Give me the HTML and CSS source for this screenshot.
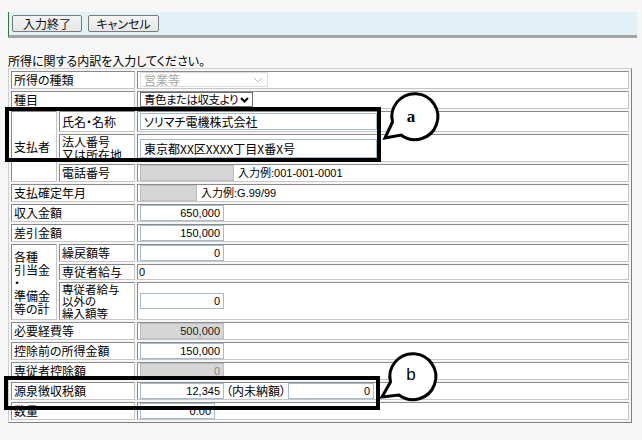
FILE: index.html
```html
<!DOCTYPE html>
<html lang="ja">
<head>
<meta charset="utf-8">
<title>所得の内訳</title>
<link rel="stylesheet" href="styles.css">
</head>
<body>
<div class="page">
  <div class="toolbar">
    <button class="btn btn-done" type="button">入力終了</button>
    <button class="btn btn-cancel" type="button">キャンセル</button>
  </div>
  <p class="lead">所得に関する内訳を入力してください。</p>
  <table class="form">
    <colgroup><col class="c1"><col class="c2"><col class="c3"></colgroup>
    <tr>
      <th colspan="2">所得の種類</th>
      <td><div class="select select-off"><span>営業等</span><svg width="10" height="6" viewBox="0 0 10 6"><path d="M1 1l4 4 4-4" fill="none" stroke="#b8b8b8" stroke-width="1"/></svg></div></td>
    </tr>
    <tr>
      <th colspan="2">種目</th>
      <td><div class="select select-on"><span>青色または収支より</span><svg width="9" height="6" viewBox="0 0 9 6"><path d="M1 1l3.5 3.5L8 1" fill="none" stroke="#000" stroke-width="2"/></svg></div></td>
    </tr>
    <tr class="row-name">
      <th rowspan="3" class="group">支払者</th>
      <th>氏名・名称</th>
      <td><input class="fld fld-text" type="text" value="ソリマチ電機株式会社"></td>
    </tr>
    <tr class="row-addr">
      <th class="two">法人番号<br>又は所在地</th>
      <td><input class="fld fld-text" type="text" value="東京都XX区XXXX丁目X番X号"></td>
    </tr>
    <tr>
      <th>電話番号</th>
      <td><input class="fld fld-off fld-tel" type="text" disabled><span class="hint">入力例:001-001-0001</span></td>
    </tr>
    <tr>
      <th colspan="2">支払確定年月</th>
      <td><input class="fld fld-off fld-ym" type="text" disabled><span class="hint">入力例:G.99/99</span></td>
    </tr>
    <tr>
      <th colspan="2">収入金額</th>
      <td><input class="fld fld-num" type="text" value="650,000"></td>
    </tr>
    <tr>
      <th colspan="2">差引金額</th>
      <td><input class="fld fld-num" type="text" value="150,000"></td>
    </tr>
    <tr>
      <th rowspan="3" class="group stack">各種<br>引当金<br>・<br>準備金<br>等の計</th>
      <th>繰戻額等</th>
      <td><input class="fld fld-num" type="text" value="0"></td>
    </tr>
    <tr class="row-thin">
      <th>専従者給与</th>
      <td class="plain">0</td>
    </tr>
    <tr>
      <th class="three">専従者給与<br>以外の<br>繰入額等</th>
      <td><input class="fld fld-num" type="text" value="0"></td>
    </tr>
    <tr>
      <th colspan="2">必要経費等</th>
      <td><input class="fld fld-num fld-off" type="text" value="500,000" disabled></td>
    </tr>
    <tr>
      <th colspan="2">控除前の所得金額</th>
      <td><input class="fld fld-num" type="text" value="150,000"></td>
    </tr>
    <tr>
      <th colspan="2">専従者控除額</th>
      <td><input class="fld fld-num fld-off fld-dim" type="text" value="0" disabled></td>
    </tr>
    <tr>
      <th colspan="2">源泉徴収税額</th>
      <td><input class="fld fld-num" type="text" value="12,345"><span class="sub">（内未納額）</span><input class="fld fld-num fld-unpaid" type="text" value="0"></td>
    </tr>
    <tr>
      <th colspan="2">数量</th>
      <td><input class="fld fld-num fld-qty" type="text" value="0.00"></td>
    </tr>
  </table>

  <svg class="marks" width="642" height="440" viewBox="0 0 642 440">
    <rect x="7" y="109" width="372" height="51" fill="none" stroke="#000" stroke-width="4"/>
    <path d="M392.5 122 A23 23 0 1 1 401 135 L385 138 Z" fill="#fff" stroke="#000" stroke-width="3"/>
    <text x="411" y="122" class="mark-a">a</text>
    <rect x="6" y="378" width="372" height="30" fill="none" stroke="#000" stroke-width="4"/>
    <path d="M390.5 382 A23 23 0 1 1 399 395 L382 397 Z" fill="#fff" stroke="#000" stroke-width="3"/>
    <text x="411" y="380" class="mark-b">b</text>
  </svg>
</div>
</body>
</html>
```

FILE: styles.css
```css
html, body {
  margin: 0;
  background: #f6f6f6;
}

body {
  font: 12px/14px "Noto Sans CJK JP", sans-serif;
  font-feature-settings: "palt";
  color: #000;
}

.page {
  position: relative;
  height: 440px;
  padding: 12px 5px 0 8px;
  box-sizing: border-box;
  overflow: hidden;
}

/* command strip */
.toolbar {
  display: flex;
  align-items: center;
  gap: 6px;
  height: 23px;
  padding: 0 3px;
  background: #e2f1f7;
  border-left: 1px solid #2e7d32;
  border-bottom: 3px solid #a4a4a4;
}

.btn {
  height: 17px;
  padding: 0;
  font: 12px/15px "Noto Sans CJK JP", sans-serif;
  font-feature-settings: "palt";
  color: #111;
  background: linear-gradient(#f4f4f4, #e6e6e6);
  border: 1px solid #7a7a7a;
  border-radius: 2px;
}

.btn-done { width: 70px; }
.btn-cancel { width: 71px; }

.lead {
  margin: 16px 0 0;
  line-height: 14px;
}

/* entry table */
.form {
  width: 624px;
  table-layout: fixed;
  border-collapse: separate;
  border-spacing: 2px;
  border: 1px solid;
  border-color: #cfcfcf #7f7f7f #7f7f7f #cfcfcf;
}

.c1 { width: 46px; }
.c2 { width: 76px; }
.c3 { width: 492px; }

.form th,
.form td {
  height: 16px;
  padding: 0 0 0 2px;
  border: 1px solid;
  border-color: #8a8a8a #c6c6c6 #c6c6c6 #8a8a8a;
  background: #fff;
  font-weight: normal;
  text-align: left;
  line-height: 16px;
  vertical-align: middle;
  white-space: nowrap;
}

.form td { padding-left: 1px; }

.form th.two { line-height: 13px; }
.form th.three { font-size: 11.5px; line-height: 12px; }
.form th.stack { line-height: 13px; }

.row-name td { padding-top: 1px; padding-bottom: 1px; }
.row-thin th, .row-thin td { height: 14px; line-height: 14px; }
.form td.plain { padding-left: 1px; font: 11px/14px "Liberation Sans", sans-serif; }

/* fields */
.fld {
  box-sizing: border-box;
  height: 16px;
  margin: 0 0 0 1px;
  padding: 0 3px;
  border: 1px solid #a7bbd0;
  background: #fff;
  color: #000;
  font: 11px/14px "Liberation Sans", "Noto Sans CJK JP", sans-serif;
  vertical-align: top;
}

.fld-text {
  width: 237px;
  height: 17px;
  font: 12px/15px "Noto Sans CJK JP", sans-serif;
  font-feature-settings: "palt";
}

.row-addr .fld-text { height: 19px; }

.fld-num { width: 84px; text-align: right; }
.fld-qty { width: 75px; }
.fld-unpaid { width: 86px; margin-left: 2px; }

.fld-off {
  background: #d6d6d6;
  border-color: #bdbdbd;
  -webkit-text-fill-color: #1a1a1a;
  opacity: 1;
}

.fld-dim { -webkit-text-fill-color: #8a8a8a; }

.fld-tel { width: 94px; }
.fld-ym { width: 57px; }

.hint {
  margin-left: 4px;
  font: 11px/16px "Liberation Sans", "Noto Sans CJK JP", sans-serif;
  vertical-align: top;
}

.sub {
  margin-left: 2px;
  line-height: 16px;
  vertical-align: top;
}

/* drop-downs */
.select {
  display: inline-flex;
  align-items: center;
  justify-content: space-between;
  gap: 2px;
  box-sizing: border-box;
  height: 15px;
  margin: 0 0 0 1px;
  padding: 0 4px 0 3px;
  vertical-align: top;
  background: #fff;
  line-height: 13px;
  white-space: nowrap;
}

.select svg { flex-shrink: 0; }

.select-off {
  width: 128px;
  color: #a8a8a8;
  border: 1px solid #dcdcdc;
}

.select-on {
  width: 113px;
  padding-right: 3px;
  border: 1px solid #6e6e6e;
  font-size: 11.5px;
  letter-spacing: -0.5px;
}

/* callout marks laid over the form */
.marks {
  position: absolute;
  top: 0;
  left: 0;
  pointer-events: none;
}

.mark-a {
  font: bold 17px "Liberation Serif", serif;
  text-anchor: middle;
}

.mark-b {
  font: 17px "Liberation Sans", sans-serif;
  text-anchor: middle;
}
```
